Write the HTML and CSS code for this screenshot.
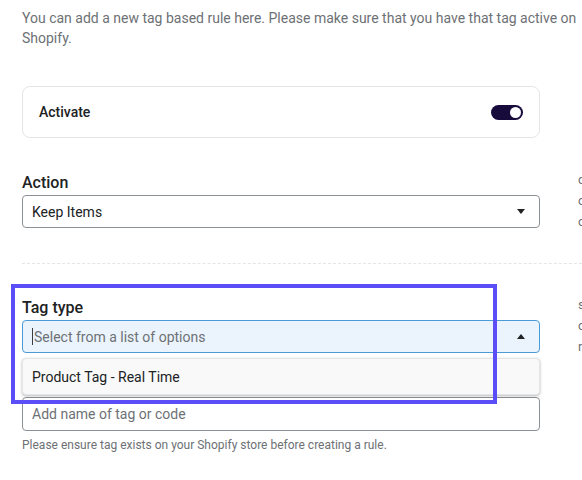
FILE: index.html
```html
<!DOCTYPE html>
<html lang="en">
<head>
<meta charset="utf-8">
<title>New tag rule</title>
<link rel="stylesheet" href="styles.css">
</head>
<body>
<div class="page">
  <p class="intro">You can add a new tag based rule here. Please make sure that you have that tag active on Shopify.</p>

  <div class="card">
    <span class="card-label">Activate</span>
    <span class="toggle" role="switch" aria-checked="true"><span class="knob"></span></span>
  </div>

  <div class="row action-row">
    <div class="field">
      <label class="label">Action</label>
      <div class="select">
        <span class="value">Keep Items</span>
        <span class="arrow down"></span>
      </div>
    </div>
    <div class="aside">
      <p>choose what happens</p>
      <p>consider the items</p>
      <p>carrying this tag.</p>
    </div>
  </div>

  <div class="divider"></div>

  <div class="row tag-row">
    <div class="field">
      <label class="label">Tag type</label>
      <div class="select-wrap">
        <div class="select focused">
          <span class="caret"></span>
          <span class="placeholder">Select from a list of options</span>
          <span class="arrow up"></span>
        </div>
        <div class="menu">
          <div class="option">Product Tag - Real Time</div>
        </div>
      </div>
      <div class="input">
        <span class="placeholder">Add name of tag or code</span>
      </div>
      <p class="help">Please ensure tag exists on your Shopify store before creating a rule.</p>
    </div>
    <div class="aside">
      <p>select the tag type</p>
      <p>choose one of the</p>
      <p>rules available.</p>
    </div>
    <div class="highlight"></div>
  </div>
</div>
</body>
</html>
```

FILE: styles.css
```css
html, body {
  margin: 0;
  padding: 0;
  overflow: hidden;
  background: #ffffff;
}

body {
  font-family: Roboto, "Noto Sans", "Liberation Sans", sans-serif;
  color: #202223;
}

.page {
  padding: 8px 0 0 22px;
  width: 900px;
}

.intro {
  margin: 0;
  width: 570px;
  font-size: 14px;
  line-height: 20px;
  color: #6d7175;
}

.card {
  margin-top: 38px;
  width: 518px;
  height: 52px;
  box-sizing: border-box;
  border: 1px solid #e4e5e7;
  border-radius: 8px;
  display: flex;
  align-items: center;
  justify-content: space-between;
  padding: 0 16px 0 16px;
}

.card-label {
  font-size: 14px;
  font-weight: 500;
  color: #202223;
}

.toggle {
  width: 32px;
  height: 15px;
  border-radius: 8px;
  background: #170b3b;
  display: flex;
  align-items: center;
  justify-content: flex-end;
  padding: 0 2px;
  box-sizing: border-box;
}

.knob {
  width: 11px;
  height: 11px;
  border-radius: 50%;
  background: #ffffff;
}

.row {
  display: grid;
  grid-template-columns: 518px 300px;
  column-gap: 38px;
  align-items: start;
}

.action-row {
  margin-top: 35px;
}

.tag-row {
  margin-top: 34px;
  position: relative;
}

.field {
  display: flex;
  flex-direction: column;
}

.label {
  font-size: 16px;
  line-height: 20px;
  font-weight: 500;
  color: #202223;
  margin-bottom: 2px;
}

.select,
.input {
  height: 33px;
  box-sizing: border-box;
  border: 1px solid #8c9196;
  border-radius: 4px;
  display: flex;
  align-items: center;
  padding: 0 14px 0 9px;
  font-size: 14px;
  background: #ffffff;
}

.select .value {
  flex: 1;
  color: #202223;
}

.select.focused {
  background: #ebf4fc;
  border-color: #4a9ad6;
}

.placeholder {
  flex: 1;
  color: #6d7175;
}

.caret {
  width: 1px;
  height: 17px;
  background: #3a3c3e;
  margin-right: 1px;
}

.arrow {
  width: 0;
  height: 0;
  border-left: 4px solid transparent;
  border-right: 4px solid transparent;
}

.arrow.down {
  border-top: 5px solid #202223;
}

.arrow.up {
  border-bottom: 5px solid #202223;
}

.select-wrap {
  position: relative;
}

.menu {
  position: absolute;
  top: calc(100% + 5px);
  left: 0;
  right: 0;
  height: 37px;
  box-sizing: border-box;
  background: #f9f9f9;
  border: 1px solid #e4e5e7;
  border-radius: 4px;
  box-shadow: 0 1px 3px rgba(0, 0, 0, 0.28);
  display: flex;
  align-items: center;
  z-index: 2;
}

.option {
  padding-left: 9px;
  font-size: 14px;
  color: #202223;
}

.input {
  margin-top: 44px;
  height: 34px;
}

.help {
  margin: 6px 0 0;
  font-size: 12px;
  line-height: 16px;
  color: #6d7175;
}

.aside {
  margin-top: -4px;
  margin-bottom: -10px;
}

.aside p {
  margin: 0;
  font-size: 13px;
  line-height: 21px;
  color: #6d7175;
}

.divider {
  margin-top: 35px;
  border-top: 1px dashed #e4e5e7;
  width: 600px;
}

.highlight {
  position: absolute;
  top: -14px;
  left: -11px;
  width: 486px;
  height: 120px;
  box-sizing: border-box;
  border: 4px solid #5b4ef6;
  z-index: 3;
  pointer-events: none;
}
```
